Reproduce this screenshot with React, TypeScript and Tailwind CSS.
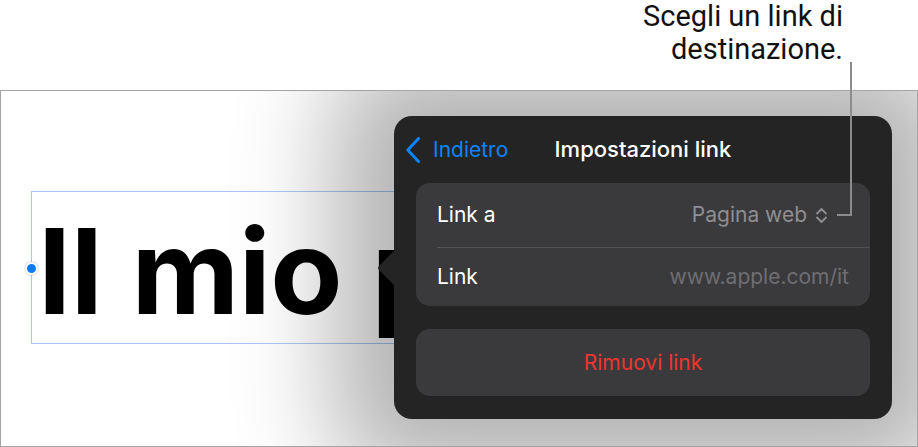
function UpDownIcon() {
    return (
        <svg width="13" height="17" viewBox="0 0 13 17" fill="none" className="ml-[8px]">
            <path d="M2 6.5 L6.5 2 L11 6.5" stroke="#8e8e93" strokeWidth="1.8" strokeLinecap="round" strokeLinejoin="round" />
            <path d="M2 10.5 L6.5 15 L11 10.5" stroke="#8e8e93" strokeWidth="1.8" strokeLinecap="round" strokeLinejoin="round" />
        </svg>
    );
}

function BackChevron() {
    return (
        <svg width="14" height="26" viewBox="0 0 14 26" fill="none">
            <path d="M12.5 1.5 L1.8 13 L12.5 24.5" stroke="#0a84ff" strokeWidth="3" strokeLinecap="round" strokeLinejoin="round" />
        </svg>
    );
}

function LinkPopover() {
    return (
        <div className="absolute left-[393px] top-[25px] w-[498px] h-[303px] rounded-[18px] bg-[#242424] shadow-[0_0_100px_60px_rgba(0,0,0,0.3)] flex flex-col px-[22px] pb-[23px]">
            {/* arrow pointing at the text box */}
            <svg width="18" height="36" viewBox="0 0 18 36" className="absolute left-[-17px] top-[134px]">
                <path d="M18 0 L2 16 Q0 18 2 20 L18 36 Z" fill="#242424" />
            </svg>

            <div className="grid grid-cols-[1fr_auto_1fr] items-center h-[67px] -mx-[22px] px-[12px]">
                <button className="flex items-center text-[#0a84ff] text-[21px]">
                    <BackChevron />
                    <span className="ml-[13px]">Indietro</span>
                </button>
                <h2 className="text-white text-[22px] font-medium">Impostazioni link</h2>
                <div />
            </div>

            <div className="rounded-[14px] bg-[#3a3a3c] flex flex-col text-[21px]">
                <div className="flex items-center justify-between h-[64px] pl-[21px] pr-[42px]">
                    <span className="text-white">Link a</span>
                    <span className="flex items-center text-[#8e8e93]">
                        Pagina web
                        <UpDownIcon />
                    </span>
                </div>
                <div className="h-px bg-[#525254] ml-[21px]" />
                <div className="flex items-center justify-between h-[58px] px-[21px]">
                    <span className="text-white">Link</span>
                    <span className="text-[#6e6e72]">www.apple.com/it</span>
                </div>
            </div>

            <button className="mt-[23px] h-[67px] rounded-[14px] bg-[#3a3a3c] text-[#f0352e] text-[21px] flex items-center justify-center">
                Rimuovi link
            </button>
        </div>
    );
}

export default function App() {
    return (
        <div className="relative w-[918px] h-[447px] bg-white overflow-hidden font-['Inter',sans-serif]">
            <div className="h-[90px] pr-[75px] text-right text-[#111] font-['Roboto',sans-serif] text-[29px] leading-[33px]">
                <p>Scegli un link di</p>
                <p>destinazione.</p>
            </div>

            <div className="relative h-[357px] border border-[#a4a4a4] overflow-hidden">
                <div className="relative ml-[30px] mt-[100px] w-[620px] h-[153px] border border-[#a9c8f4] pl-[6px] pt-[20px]">
                    <span className="block text-black text-[118px] font-bold leading-none tracking-[-0.5px] [word-spacing:2px] whitespace-nowrap">
                        Il mio primo
                    </span>
                    <span className="absolute left-[-7px] top-[70px] w-[13px] h-[13px] rounded-full bg-[#0a7aff] border-2 border-white shadow-[0_0_2px_rgba(0,0,0,0.35)]" />
                </div>

                <LinkPopover />
            </div>

            {/* callout leader line */}
            <svg width="918" height="447" className="absolute inset-0 pointer-events-none">
                <path d="M851 62 V215 H837" stroke="#8c8c8c" strokeWidth="2" fill="none" />
            </svg>
        </div>
    );
}
